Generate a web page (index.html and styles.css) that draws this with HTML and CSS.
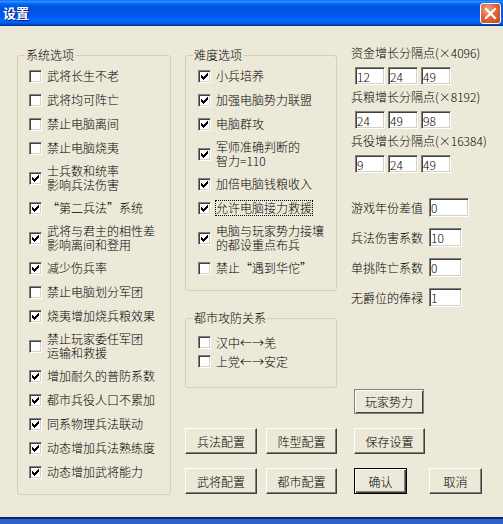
FILE: index.html
```html
<!DOCTYPE html>
<html lang="zh-CN">
<head>
    <meta charset="UTF-8" />
    <title>设置</title>
    <link rel="stylesheet" href="styles.css">
</head>
<body>
<div class="window">
    <div class="titlebar">
        <span class="title">设置</span>
        <span class="close-btn">
            <svg width="19" height="19" viewBox="0 0 19 19"><path d="M5 5 L14 14 M14 5 L5 14" stroke="#fff" stroke-width="2.2" stroke-linecap="square"/></svg>
        </span>
    </div>

    <div class="client">
        <fieldset class="group group-sys">
            <legend>系统选项</legend>
            <div class="opt"><span class="chk"></span><span class="txt">武将长生不老</span></div>
            <div class="opt"><span class="chk"></span><span class="txt">武将均可阵亡</span></div>
            <div class="opt"><span class="chk"></span><span class="txt">禁止电脑离间</span></div>
            <div class="opt"><span class="chk"></span><span class="txt">禁止电脑烧夷</span></div>
            <div class="opt two"><span class="chk on"><svg viewBox="0 0 9 9"><path d="M7 1h1v1h-1z M6 2h2v1h-2z M1 3h1v1h-1z M5 3h3v1h-3z M1 4h2v1h-2z M4 4h3v1h-3z M1 5h5v1h-5z M2 6h3v1h-3z M3 7h1v1h-1z"/></svg></span><span class="txt">士兵数和统率<br>影响兵法伤害</span></div>
            <div class="opt"><span class="chk on"><svg viewBox="0 0 9 9"><path d="M7 1h1v1h-1z M6 2h2v1h-2z M1 3h1v1h-1z M5 3h3v1h-3z M1 4h2v1h-2z M4 4h3v1h-3z M1 5h5v1h-5z M2 6h3v1h-3z M3 7h1v1h-1z"/></svg></span><span class="txt">“第二兵法”系统</span></div>
            <div class="opt two"><span class="chk on"><svg viewBox="0 0 9 9"><path d="M7 1h1v1h-1z M6 2h2v1h-2z M1 3h1v1h-1z M5 3h3v1h-3z M1 4h2v1h-2z M4 4h3v1h-3z M1 5h5v1h-5z M2 6h3v1h-3z M3 7h1v1h-1z"/></svg></span><span class="txt">武将与君主的相性差<br>影响离间和登用</span></div>
            <div class="opt"><span class="chk on"><svg viewBox="0 0 9 9"><path d="M7 1h1v1h-1z M6 2h2v1h-2z M1 3h1v1h-1z M5 3h3v1h-3z M1 4h2v1h-2z M4 4h3v1h-3z M1 5h5v1h-5z M2 6h3v1h-3z M3 7h1v1h-1z"/></svg></span><span class="txt">减少伤兵率</span></div>
            <div class="opt"><span class="chk"></span><span class="txt">禁止电脑划分军团</span></div>
            <div class="opt"><span class="chk on"><svg viewBox="0 0 9 9"><path d="M7 1h1v1h-1z M6 2h2v1h-2z M1 3h1v1h-1z M5 3h3v1h-3z M1 4h2v1h-2z M4 4h3v1h-3z M1 5h5v1h-5z M2 6h3v1h-3z M3 7h1v1h-1z"/></svg></span><span class="txt">烧夷增加烧兵粮效果</span></div>
            <div class="opt two"><span class="chk"></span><span class="txt">禁止玩家委任军团<br>运输和救援</span></div>
            <div class="opt"><span class="chk on"><svg viewBox="0 0 9 9"><path d="M7 1h1v1h-1z M6 2h2v1h-2z M1 3h1v1h-1z M5 3h3v1h-3z M1 4h2v1h-2z M4 4h3v1h-3z M1 5h5v1h-5z M2 6h3v1h-3z M3 7h1v1h-1z"/></svg></span><span class="txt">增加耐久的普防系数</span></div>
            <div class="opt"><span class="chk on"><svg viewBox="0 0 9 9"><path d="M7 1h1v1h-1z M6 2h2v1h-2z M1 3h1v1h-1z M5 3h3v1h-3z M1 4h2v1h-2z M4 4h3v1h-3z M1 5h5v1h-5z M2 6h3v1h-3z M3 7h1v1h-1z"/></svg></span><span class="txt">都市兵役人口不累加</span></div>
            <div class="opt"><span class="chk on"><svg viewBox="0 0 9 9"><path d="M7 1h1v1h-1z M6 2h2v1h-2z M1 3h1v1h-1z M5 3h3v1h-3z M1 4h2v1h-2z M4 4h3v1h-3z M1 5h5v1h-5z M2 6h3v1h-3z M3 7h1v1h-1z"/></svg></span><span class="txt">同系物理兵法联动</span></div>
            <div class="opt"><span class="chk on"><svg viewBox="0 0 9 9"><path d="M7 1h1v1h-1z M6 2h2v1h-2z M1 3h1v1h-1z M5 3h3v1h-3z M1 4h2v1h-2z M4 4h3v1h-3z M1 5h5v1h-5z M2 6h3v1h-3z M3 7h1v1h-1z"/></svg></span><span class="txt">动态增加兵法熟练度</span></div>
            <div class="opt"><span class="chk on"><svg viewBox="0 0 9 9"><path d="M7 1h1v1h-1z M6 2h2v1h-2z M1 3h1v1h-1z M5 3h3v1h-3z M1 4h2v1h-2z M4 4h3v1h-3z M1 5h5v1h-5z M2 6h3v1h-3z M3 7h1v1h-1z"/></svg></span><span class="txt">动态增加武将能力</span></div>
        </fieldset>

        <div class="main">
            <div class="upper">
                <div class="col-mid">
                    <fieldset class="group group-diff">
                        <legend>难度选项</legend>
                        <div class="opt"><span class="chk on"><svg viewBox="0 0 9 9"><path d="M7 1h1v1h-1z M6 2h2v1h-2z M1 3h1v1h-1z M5 3h3v1h-3z M1 4h2v1h-2z M4 4h3v1h-3z M1 5h5v1h-5z M2 6h3v1h-3z M3 7h1v1h-1z"/></svg></span><span class="txt">小兵培养</span></div>
                        <div class="opt"><span class="chk on"><svg viewBox="0 0 9 9"><path d="M7 1h1v1h-1z M6 2h2v1h-2z M1 3h1v1h-1z M5 3h3v1h-3z M1 4h2v1h-2z M4 4h3v1h-3z M1 5h5v1h-5z M2 6h3v1h-3z M3 7h1v1h-1z"/></svg></span><span class="txt">加强电脑势力联盟</span></div>
                        <div class="opt"><span class="chk on"><svg viewBox="0 0 9 9"><path d="M7 1h1v1h-1z M6 2h2v1h-2z M1 3h1v1h-1z M5 3h3v1h-3z M1 4h2v1h-2z M4 4h3v1h-3z M1 5h5v1h-5z M2 6h3v1h-3z M3 7h1v1h-1z"/></svg></span><span class="txt">电脑群攻</span></div>
                        <div class="opt two"><span class="chk on"><svg viewBox="0 0 9 9"><path d="M7 1h1v1h-1z M6 2h2v1h-2z M1 3h1v1h-1z M5 3h3v1h-3z M1 4h2v1h-2z M4 4h3v1h-3z M1 5h5v1h-5z M2 6h3v1h-3z M3 7h1v1h-1z"/></svg></span><span class="txt">军师准确判断的<br>智力=110</span></div>
                        <div class="opt"><span class="chk on"><svg viewBox="0 0 9 9"><path d="M7 1h1v1h-1z M6 2h2v1h-2z M1 3h1v1h-1z M5 3h3v1h-3z M1 4h2v1h-2z M4 4h3v1h-3z M1 5h5v1h-5z M2 6h3v1h-3z M3 7h1v1h-1z"/></svg></span><span class="txt">加倍电脑钱粮收入</span></div>
                        <div class="opt"><span class="chk on"><svg viewBox="0 0 9 9"><path d="M7 1h1v1h-1z M6 2h2v1h-2z M1 3h1v1h-1z M5 3h3v1h-3z M1 4h2v1h-2z M4 4h3v1h-3z M1 5h5v1h-5z M2 6h3v1h-3z M3 7h1v1h-1z"/></svg></span><span class="txt focus">允许电脑接力救援</span></div>
                        <div class="opt two"><span class="chk on"><svg viewBox="0 0 9 9"><path d="M7 1h1v1h-1z M6 2h2v1h-2z M1 3h1v1h-1z M5 3h3v1h-3z M1 4h2v1h-2z M4 4h3v1h-3z M1 5h5v1h-5z M2 6h3v1h-3z M3 7h1v1h-1z"/></svg></span><span class="txt">电脑与玩家势力接壤<br>的都设重点布兵</span></div>
                        <div class="opt"><span class="chk"></span><span class="txt">禁止“遇到华佗”</span></div>
                    </fieldset>

                    <fieldset class="group group-city">
                        <legend>都市攻防关系</legend>
                        <div class="opt small"><span class="chk"></span><span class="txt">汉中←→羌</span></div>
                        <div class="opt small"><span class="chk"></span><span class="txt">上党←→安定</span></div>
                    </fieldset>
                </div>

                <div class="col-right">
                    <div class="cap">资金增长分隔点(×4096)</div>
                    <div class="triple">
                        <input class="num" type="text" value="12">
                        <input class="num" type="text" value="24">
                        <input class="num" type="text" value="49">
                    </div>
                    <div class="cap">兵粮增长分隔点(×8192)</div>
                    <div class="triple">
                        <input class="num" type="text" value="24">
                        <input class="num" type="text" value="49">
                        <input class="num" type="text" value="98">
                    </div>
                    <div class="cap">兵役增长分隔点(×16384)</div>
                    <div class="triple">
                        <input class="num" type="text" value="9">
                        <input class="num" type="text" value="24">
                        <input class="num" type="text" value="49">
                    </div>

                    <div class="fields">
                        <div class="field"><span class="flabel">游戏年份差值</span><input class="num wide" type="text" value="0"></div>
                        <div class="field"><span class="flabel">兵法伤害系数</span><input class="num mid" type="text" value="10"></div>
                        <div class="field"><span class="flabel">单挑阵亡系数</span><input class="num mid" type="text" value="0"></div>
                        <div class="field"><span class="flabel">无爵位的俸禄</span><input class="num mid" type="text" value="1"></div>
                    </div>

                    <button class="btn btn-player" type="button">玩家势力</button>
                </div>
            </div>

            <div class="btn-row">
                <button class="btn btn-cfg" type="button">兵法配置</button>
                <button class="btn btn-cfg2" type="button">阵型配置</button>
                <button class="btn btn-save" type="button">保存设置</button>
            </div>
            <div class="btn-row">
                <button class="btn btn-cfg" type="button">武将配置</button>
                <button class="btn btn-cfg2" type="button">都市配置</button>
                <button class="btn btn-small btn-default" type="button">确认</button>
                <button class="btn btn-small btn-cancel" type="button">取消</button>
            </div>
        </div>
    </div>

    <div class="taskstrip"></div>
</div>
</body>
</html>
```

FILE: styles.css
```css
html, body {
    margin: 0;
    padding: 0;
}
body {
    width: 503px;
    height: 524px;
    overflow: hidden;
    font-family: "Noto Sans CJK SC", "Liberation Sans", sans-serif;
    font-size: 12px;
    font-weight: 300;
    color: #000;
    background: #ece9d8;
}
.window {
    width: 503px;
    height: 524px;
    display: flex;
    flex-direction: column;
}

/* title bar */
.titlebar {
    height: 26px;
    flex: none;
    display: flex;
    align-items: center;
    justify-content: space-between;
    padding: 0 2px 0 3px;
    background: linear-gradient(to bottom,
        #0058ee 0%, #3593ff 4%, #288eff 7%, #127dff 10%, #036ffc 13%,
        #0262ee 18%, #0057e5 24%, #0054e3 30%, #0055eb 56%, #005bf5 66%,
        #026afe 76%, #0062ef 86%, #0052d6 92%, #0040ab 96%, #003092 100%);
}
.title {
    color: #fff;
    font-weight: bold;
    font-size: 13px;
    line-height: 14px;
    text-shadow: 1px 1px #0a1883;
}
.close-btn {
    width: 21px;
    height: 21px;
    box-sizing: border-box;
    border: 1px solid #fff;
    border-radius: 3px;
    background: radial-gradient(circle at 35% 30%, #f2a58a 0%, #e2643d 45%, #c84018 100%);
    display: flex;
    align-items: center;
    justify-content: center;
}
.close-btn svg {
    display: block;
}

/* client area */
.client {
    flex: 1;
    display: flex;
    gap: 14px;
    padding: 20px 0 0 17px;
    box-sizing: border-box;
}
.group {
    margin: 0;
    border: 1px solid #d0d0bf;
    border-radius: 3px;
    padding: 2px 0 10px 7px;
    min-width: 0;
    box-sizing: border-box;
}
.group legend {
    padding: 0 1px;
    line-height: 14px;
}
.group-sys {
    width: 154px;
    margin-top: 2px;
    align-self: flex-start;
}
.main {
    width: 318px;
}
.upper {
    display: flex;
    gap: 14px;
}
.col-mid {
    width: 152px;
    margin-top: 2px;
}
.group-diff {
    width: 152px;
}
.group-diff .opt {
    padding-left: 5px;
}
.group-city {
    width: 152px;
    margin-top: 20px;
    padding-top: 8px;
    padding-bottom: 16px;
}
.group-city .opt {
    padding-left: 5px;
}

/* check options */
.opt {
    display: flex;
    align-items: center;
    height: 24px;
    padding-left: 4px;
}
.opt.two {
    height: 36px;
}
.opt.small {
    height: 19px;
}
.txt {
    line-height: 14px;
    white-space: nowrap;
}
.txt.focus {
    outline: 1px dotted #000;
}
.chk {
    flex: none;
    width: 13px;
    height: 13px;
    box-sizing: border-box;
    padding: 1px;
    margin-right: 5px;
    background: #fff;
    border: 1px solid;
    border-color: #808080 #fff #fff #808080;
    box-shadow: inset 1px 1px #404040, inset -1px -1px #d4d0c8;
}
.chk svg {
    display: block;
    width: 9px;
    height: 9px;
    shape-rendering: crispEdges;
}
.chk svg path {
    fill: #000;
}

/* right column */
.col-right {
    width: 152px;
    display: flex;
    flex-direction: column;
    align-items: flex-start;
}
.cap {
    line-height: 14px;
    white-space: nowrap;
}
.triple {
    display: flex;
    gap: 3px;
    margin: 7px 0 5px 4px;
}
.num {
    height: 18px;
    width: 30px;
    box-sizing: border-box;
    margin: 0;
    padding: 0 1px;
    font-family: "Noto Sans CJK SC", "Liberation Sans", sans-serif;
    font-size: 12px;
    font-weight: 300;
    color: #000;
    background: #fff;
    border: 1px solid;
    border-color: #808080 #fff #fff #808080;
    box-shadow: inset 1px 1px #404040, inset -1px -1px #d4d0c8;
    outline: none;
}
.fields {
    margin-top: 20px;
    display: flex;
    flex-direction: column;
    gap: 11px;
}
.field {
    display: flex;
    align-items: center;
    height: 19px;
}
.flabel {
    width: 78px;
    white-space: nowrap;
}
.field .num {
    height: 19px;
}
.num.wide {
    width: 40px;
}
.num.mid {
    width: 33px;
}

/* buttons */
.btn {
    height: 26px;
    margin: 0;
    padding: 0;
    font-family: "Noto Sans CJK SC", "Liberation Sans", sans-serif;
    font-size: 12px;
    font-weight: 300;
    color: #000;
    background: #ece9d8;
    box-sizing: border-box;
    border: 1px solid;
    border-color: #fff #404040 #404040 #fff;
    box-shadow: inset -1px -1px #808080;
}
.btn-player {
    width: 70px;
    height: 25px;
    margin: 82px 0 0 3px;
    border-color: #808080;
    box-shadow: inset 1px 1px #fff, inset -1px -1px #404040;
}
.btn-row {
    display: flex;
    margin-top: 14px;
}
.btn-cfg {
    width: 72px;
}
.btn-cfg2 {
    width: 71px;
    margin-left: 9px;
}
.btn-save {
    width: 71px;
    margin-left: 17px;
}
.btn-small {
    width: 53px;
}
.btn-default {
    margin-left: 17px;
    border: 1px solid #000;
    box-shadow: inset 1px 1px #fff, inset -1px -1px #404040, inset -2px -2px #808080;
}
.btn-cancel {
    margin-left: 22px;
}

.taskstrip {
    height: 7px;
    flex: none;
    background: linear-gradient(to bottom, #0a246a 0, #0a246a 2px, #2f63c8 2px);
}
```
